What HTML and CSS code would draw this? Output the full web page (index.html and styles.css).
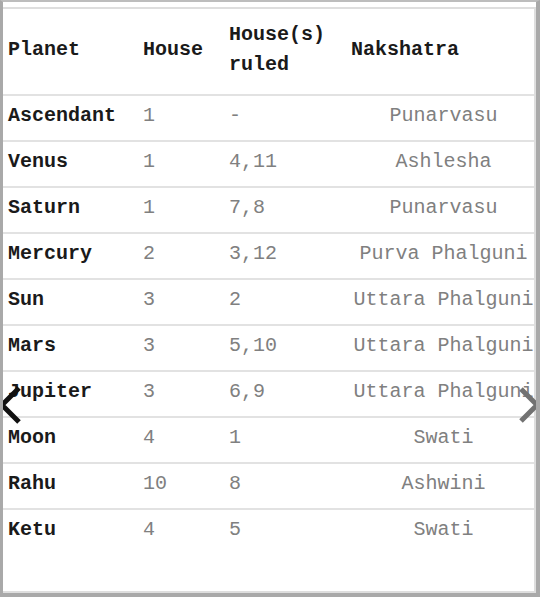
FILE: index.html
```html
<!DOCTYPE html>
<html>
<head>
<meta charset="utf-8">
<link rel="stylesheet" href="styles.css">
</head>
<body>
<div class="frame">
  <div class="panel">
    <table class="grid">
      <colgroup>
        <col class="c1"><col class="c2"><col class="c3"><col class="c4">
      </colgroup>
      <thead>
        <tr><th>Planet</th><th>House</th><th>House(s)<br>ruled</th><th>Nakshatra</th></tr>
      </thead>
      <tbody>
        <tr><td>Ascendant</td><td>1</td><td>-</td><td>Punarvasu</td></tr>
        <tr><td>Venus</td><td>1</td><td>4,11</td><td>Ashlesha</td></tr>
        <tr><td>Saturn</td><td>1</td><td>7,8</td><td>Punarvasu</td></tr>
        <tr><td>Mercury</td><td>2</td><td>3,12</td><td>Purva Phalguni</td></tr>
        <tr><td>Sun</td><td>3</td><td>2</td><td>Uttara Phalguni</td></tr>
        <tr><td>Mars</td><td>3</td><td>5,10</td><td>Uttara Phalguni</td></tr>
        <tr><td>Jupiter</td><td>3</td><td>6,9</td><td>Uttara Phalguni</td></tr>
        <tr><td>Moon</td><td>4</td><td>1</td><td>Swati</td></tr>
        <tr><td>Rahu</td><td>10</td><td>8</td><td>Ashwini</td></tr>
        <tr><td>Ketu</td><td>4</td><td>5</td><td>Swati</td></tr>
      </tbody>
    </table>
  </div>
  <svg class="arrow arrow-left" width="24" height="40" viewBox="0 0 24 40"><path d="M19 2 L2 19 L19 36" fill="none" stroke="#111" stroke-width="5"/></svg>
  <svg class="arrow arrow-right" width="24" height="40" viewBox="0 0 24 40"><path d="M5 3 L21 19 L5 35" fill="none" stroke="#727272" stroke-width="5"/></svg>
</div>
</body>
</html>
```

FILE: styles.css
```css
html, body {
  margin: 0;
  padding: 0;
  background: #fff;
}
.frame {
  position: relative;
  width: 540px;
  height: 597px;
  box-sizing: border-box;
  border-left: 3px solid #a9a9a9;
  border-right: 4px solid #a9a9a9;
  border-top: 2px solid #bdbdbd;
  border-bottom: 4px solid #a9a9a9;
  padding-top: 5px;
  overflow: hidden;
}
.panel {
  height: 100%;
  box-sizing: border-box;
  border-top: 2px solid #dedede;
  border-right: 2px solid #dedede;
  border-bottom: 2px solid #dedede;
  overflow: hidden;
}
.grid {
  border-collapse: collapse;
  table-layout: fixed;
  width: 545px;
  font-family: "Liberation Mono", "Courier New", monospace;
  font-size: 20px;
}
.c1 { width: 128px; }
.c2 { width: 86px; }
.c3 { width: 122px; }
.c4 { width: 209px; }
.grid th {
  text-align: left;
  font-weight: bold;
  color: #1a1a1a;
  line-height: 30px;
  height: 81px;
  padding: 0 12px 4px 12px;
  border-bottom: 2px solid #e2e2e2;
  vertical-align: middle;
}
.grid th:first-child,
.grid td:first-child {
  padding-left: 5px;
}
.grid td {
  height: 40px;
  padding: 0 12px 4px 12px;
  line-height: 24px;
  color: #808080;
  border-bottom: 2px solid #e2e2e2;
  white-space: nowrap;
}
.grid td:first-child {
  color: #1a1a1a;
  font-weight: bold;
}
.grid td:last-child {
  text-align: center;
}
.grid tbody tr:last-child td {
  border-bottom: none;
}
.arrow {
  position: absolute;
  top: 384px;
}
.arrow-left { left: -3px; }
.arrow-right { right: -4px; }
```
